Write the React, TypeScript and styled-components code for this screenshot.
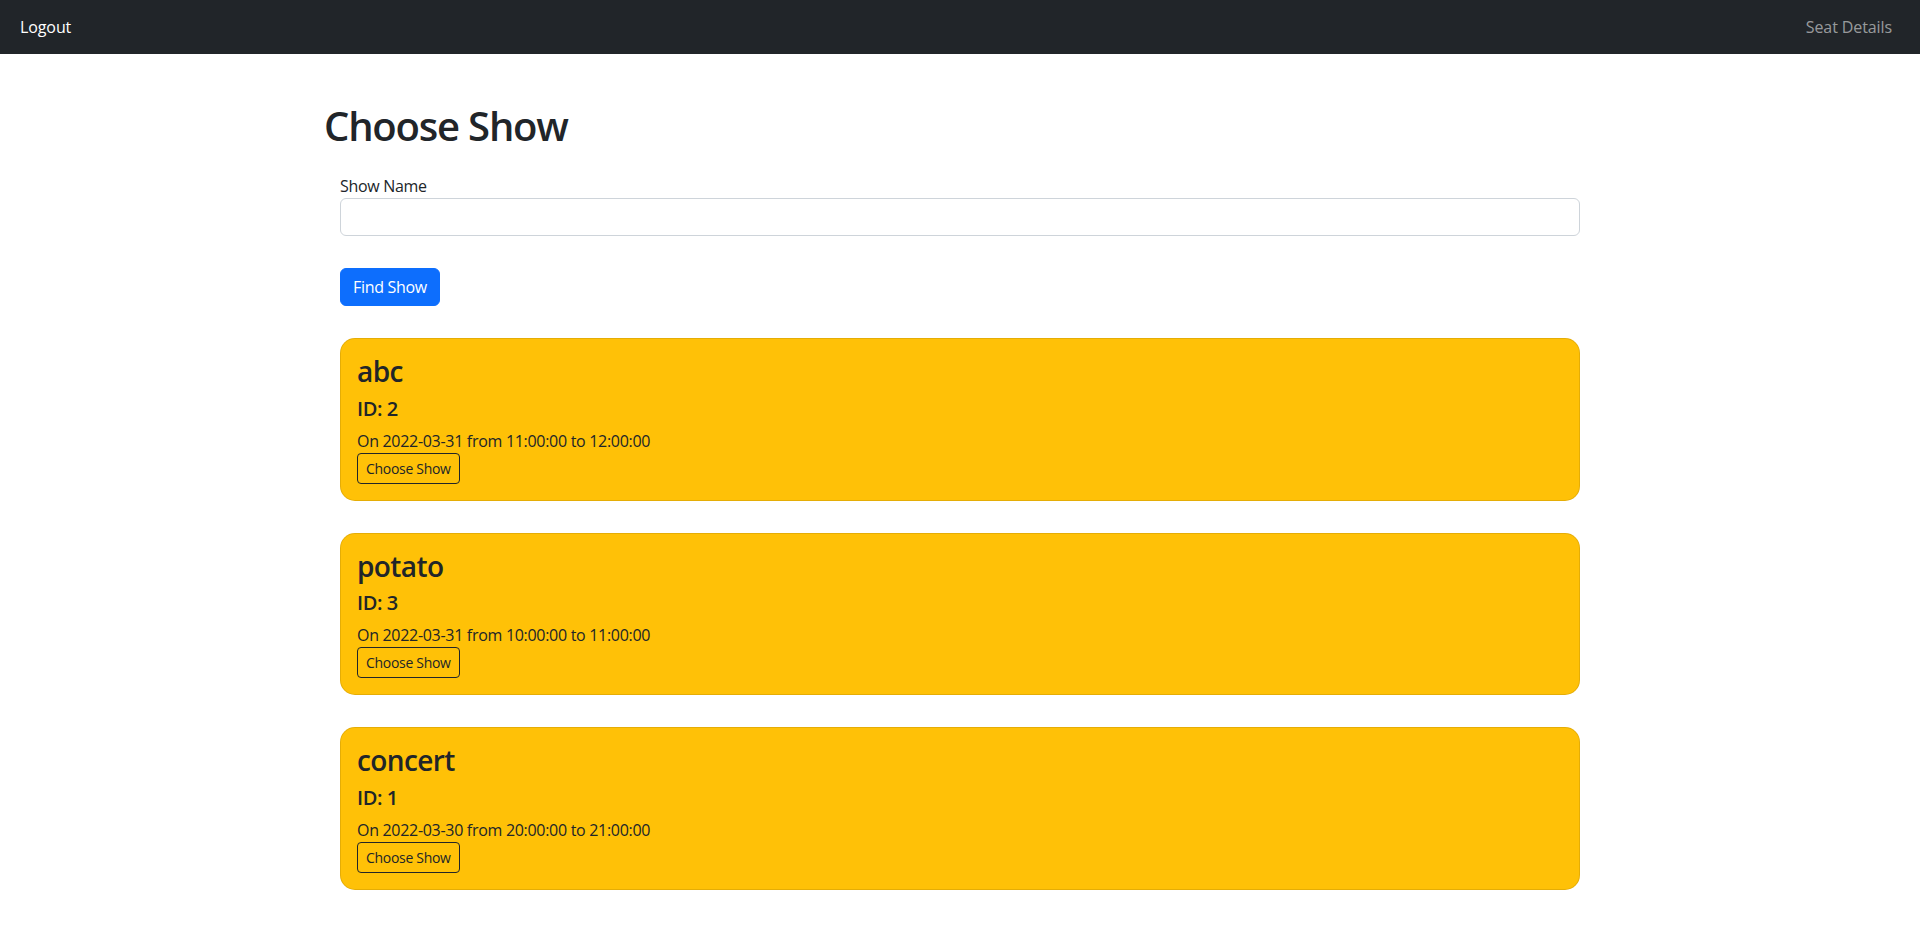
import React from "react";
import styled, { createGlobalStyle } from "styled-components";

const GlobalStyle = createGlobalStyle`
  * { box-sizing: border-box; }
  html, body { margin: 0; padding: 0; }
  body {
    font-family: "Open Sans", "Noto Sans", "Liberation Sans", sans-serif;
    font-size: 16px;
    line-height: 1.5;
    letter-spacing: -0.3px;
    color: #212529;
    background: #fff;
  }
`;

const NavBar = styled.nav`
  height: 54px;
  background: #212529;
  display: flex;
  align-items: center;
  justify-content: space-between;
  padding: 0 20px 0 12px;
`;

const NavLink = styled.a<{ $active?: boolean }>`
  padding: 8px;
  font-size: 16px;
  line-height: 24px;
  letter-spacing: -0.1px;
  color: ${(p) => (p.$active ? "#fff" : "rgba(255,255,255,0.55)")};
  text-decoration: none;
  cursor: pointer;
`;

const Container = styled.main`
  width: 1320px;
  margin: 0 auto;
  padding: 48px 24px 40px;
`;

const Title = styled.h1`
  margin: 0 0 24px;
  font-size: 40px;
  line-height: 48px;
  font-weight: 600;
  letter-spacing: -1.2px;
`;

const Body = styled.div`
  padding: 0 16px;
`;

const Label = styled.label`
  display: block;
  font-size: 16px;
  line-height: 24px;
`;

const Input = styled.input`
  display: block;
  width: 100%;
  height: 38px;
  padding: 6px 12px;
  font: inherit;
  border: 1px solid #ced4da;
  border-radius: 6px;
  outline: none;
  margin-bottom: 32px;
`;

const PrimaryButton = styled.button`
  display: block;
  height: 38px;
  padding: 6px 12px;
  font-family: inherit;
  font-size: 16px;
  line-height: 24px;
  letter-spacing: -0.3px;
  color: #fff;
  background: #0d6efd;
  border: 1px solid #0d6efd;
  border-radius: 6px;
  cursor: pointer;
  margin-bottom: 32px;
`;

const CardList = styled.div`
  display: flex;
  flex-direction: column;
  gap: 32px;
`;

const Card = styled.div`
  background: #ffc107;
  border: 1px solid rgba(0, 0, 0, 0.1);
  border-radius: 15px;
  padding: 16px;
`;

const CardTitle = styled.h3`
  margin: 0 0 8px;
  font-size: 28px;
  line-height: 33.6px;
  font-weight: 600;
  letter-spacing: -0.6px;
`;

const CardSub = styled.h5`
  margin: 0 0 8px;
  font-size: 20px;
  line-height: 24px;
  font-weight: 600;
  letter-spacing: -0.4px;
`;

const CardText = styled.p`
  margin: 0;
  font-size: 16px;
  line-height: 24px;
`;

const OutlineButton = styled.button`
  display: block;
  height: 31px;
  padding: 4px 8px;
  font-family: inherit;
  font-size: 14px;
  line-height: 21px;
  letter-spacing: -0.3px;
  color: #212529;
  background: transparent;
  border: 1px solid #212529;
  border-radius: 4px;
  cursor: pointer;
`;

const shows = [
  { name: "abc", id: 2, date: "2022-03-31", from: "11:00:00", to: "12:00:00" },
  { name: "potato", id: 3, date: "2022-03-31", from: "10:00:00", to: "11:00:00" },
  { name: "concert", id: 1, date: "2022-03-30", from: "20:00:00", to: "21:00:00" },
];

export default function App() {
  return (
    <>
      <GlobalStyle />
      <NavBar>
        <NavLink $active>Logout</NavLink>
        <NavLink>Seat Details</NavLink>
      </NavBar>
      <Container>
        <Title>Choose Show</Title>
        <Body>
          <Label htmlFor="showName">Show Name</Label>
          <Input id="showName" type="text" />
          <PrimaryButton>Find Show</PrimaryButton>
          <CardList>
            {shows.map((s) => (
              <Card key={s.id}>
                <CardTitle>{s.name}</CardTitle>
                <CardSub>ID: {s.id}</CardSub>
                <CardText>
                  On {s.date} from {s.from} to {s.to}
                </CardText>
                <OutlineButton>Choose Show</OutlineButton>
              </Card>
            ))}
          </CardList>
        </Body>
      </Container>
    </>
  );
}
